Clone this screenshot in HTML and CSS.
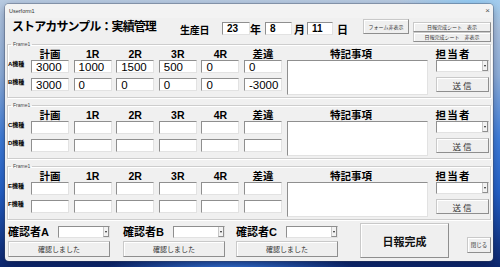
FILE: index.html
```html
<!DOCTYPE html>
<html lang="ja">
<head>
<meta charset="utf-8">
<title>UserForm1</title>
<link rel="stylesheet" href="styles.css">
</head>
<body>
<div class="window">
  <div class="titlebar">
    <span class="caption">Userform1</span>
    <span class="close">×</span>
  </div>

  <div class="topbar">
    <h1 class="title">ストアカサンプル：実績管理</h1>
    <span class="date-label">生産日</span>
    <div class="tb date d-year">23</div>
    <span class="unit u-year">年</span>
    <div class="tb date d-month">8</div>
    <span class="unit u-month">月</span>
    <div class="tb date d-day">11</div>
    <span class="unit u-day">日</span>
    <button class="btn btn-form">フォーム非表示</button>
    <div class="btn-stack">
      <button class="btn btn-sheet">日報完成シート　表示</button>
      <button class="btn btn-sheet">日報完成シート　非表示</button>
    </div>
  </div>

  <fieldset class="frame">
    <legend>Frame1</legend>
    <div class="grid">
      <span class="r0"></span>
      <span class="hd r0">計画</span>
      <span class="hd r0">1R</span>
      <span class="hd r0">2R</span>
      <span class="hd r0">3R</span>
      <span class="hd r0">4R</span>
      <span class="hd r0">差違</span>
      <span class="hd hd-note r0">特記事項</span>
      <span class="hd hd-tanto r0">担当者</span>

      <span class="rowlabel r1">A機種</span>
      <div class="tb r1">3000</div>
      <div class="tb r1">1000</div>
      <div class="tb r1">1500</div>
      <div class="tb r1">500</div>
      <div class="tb r1">0</div>
      <div class="tb r1">0</div>
      <div class="memo"></div>
      <div class="combo cell-combo"><span class="arrow"></span></div>

      <span class="rowlabel r2">B機種</span>
      <div class="tb r2">3000</div>
      <div class="tb r2">0</div>
      <div class="tb r2">0</div>
      <div class="tb r2">0</div>
      <div class="tb r2">0</div>
      <div class="tb r2">-3000</div>
      <button class="btn send">送信</button>
    </div>
  </fieldset>

  <fieldset class="frame">
    <legend>Frame1</legend>
    <div class="grid">
      <span class="r0"></span>
      <span class="hd r0">計画</span>
      <span class="hd r0">1R</span>
      <span class="hd r0">2R</span>
      <span class="hd r0">3R</span>
      <span class="hd r0">4R</span>
      <span class="hd r0">差違</span>
      <span class="hd hd-note r0">特記事項</span>
      <span class="hd hd-tanto r0">担当者</span>

      <span class="rowlabel r1">C機種</span>
      <div class="tb r1"></div>
      <div class="tb r1"></div>
      <div class="tb r1"></div>
      <div class="tb r1"></div>
      <div class="tb r1"></div>
      <div class="tb r1"></div>
      <div class="memo"></div>
      <div class="combo cell-combo"><span class="arrow"></span></div>

      <span class="rowlabel r2">D機種</span>
      <div class="tb r2"></div>
      <div class="tb r2"></div>
      <div class="tb r2"></div>
      <div class="tb r2"></div>
      <div class="tb r2"></div>
      <div class="tb r2"></div>
      <button class="btn send">送信</button>
    </div>
  </fieldset>

  <fieldset class="frame">
    <legend>Frame1</legend>
    <div class="grid">
      <span class="r0"></span>
      <span class="hd r0">計画</span>
      <span class="hd r0">1R</span>
      <span class="hd r0">2R</span>
      <span class="hd r0">3R</span>
      <span class="hd r0">4R</span>
      <span class="hd r0">差違</span>
      <span class="hd hd-note r0">特記事項</span>
      <span class="hd hd-tanto r0">担当者</span>

      <span class="rowlabel r1">E機種</span>
      <div class="tb r1"></div>
      <div class="tb r1"></div>
      <div class="tb r1"></div>
      <div class="tb r1"></div>
      <div class="tb r1"></div>
      <div class="tb r1"></div>
      <div class="memo"></div>
      <div class="combo cell-combo"><span class="arrow"></span></div>

      <span class="rowlabel r2">F機種</span>
      <div class="tb r2"></div>
      <div class="tb r2"></div>
      <div class="tb r2"></div>
      <div class="tb r2"></div>
      <div class="tb r2"></div>
      <div class="tb r2"></div>
      <button class="btn send">送信</button>
    </div>
  </fieldset>

  <div class="bottombar">
    <div class="confirm">
      <div class="confirm-top">
        <span class="confirm-label">確認者A</span>
        <div class="combo"><span class="arrow"></span></div>
      </div>
      <button class="btn confirm-btn">確認しました</button>
    </div>
    <div class="confirm confirm-b">
      <div class="confirm-top">
        <span class="confirm-label">確認者B</span>
        <div class="combo"><span class="arrow"></span></div>
      </div>
      <button class="btn confirm-btn">確認しました</button>
    </div>
    <div class="confirm confirm-c">
      <div class="confirm-top">
        <span class="confirm-label">確認者C</span>
        <div class="combo"><span class="arrow"></span></div>
      </div>
      <button class="btn confirm-btn">確認しました</button>
    </div>
    <button class="btn btn-done">日報完成</button>
    <button class="btn btn-close">閉じる</button>
  </div>
</div>
</body>
</html>
```

FILE: styles.css
```css
* {
  box-sizing: border-box;
}

html,
body {
  margin: 0;
  padding: 0;
}

body {
  width: 500px;
  height: 267px;
  overflow: hidden;
  position: relative;
  font-family: "Liberation Sans", "Noto Sans CJK JP", sans-serif;
  color: #000;
  background:
    radial-gradient(ellipse 170px 30px at 230px 272px, rgba(60, 130, 235, 0.95) 0%, rgba(60, 130, 235, 0) 75%),
    radial-gradient(ellipse 90px 40px at 470px 0px, rgba(150, 205, 245, 1) 0%, rgba(150, 205, 245, 0) 80%),
    linear-gradient(180deg, #b9cbe2 0%, #8fb0dc 28%, #3f7edb 52%, #2461c8 72%, #0d276e 100%);
}

/* ---------- window ---------- */
.window {
  position: absolute;
  left: 5px;
  top: 4px;
  width: 488px;
  height: 257px;
  background: #f0f0f0;
  border-radius: 4px;
  box-shadow: 0 0 0 1px rgba(60, 70, 90, 0.35), 0 3px 10px rgba(0, 0, 30, 0.35);
  display: flex;
  flex-direction: column;
}

.titlebar {
  height: 14px;
  display: flex;
  align-items: center;
  justify-content: space-between;
  padding: 0 3px 0 4px;
  background: #f3f3f3;
  border-radius: 4px 4px 0 0;
}

.caption {
  font-size: 5.5px;
  color: #333;
}

.close {
  font-size: 8px;
  line-height: 8px;
  color: #555;
}

/* ---------- top bar ---------- */
.topbar {
  height: 23px;
  display: flex;
  align-items: flex-start;
  padding-left: 7px;
}

.title {
  margin: 2px 0 0;
  width: 168px;
  font-size: 12px;
  line-height: 14px;
  font-weight: 700;
  letter-spacing: -0.9px;
  white-space: nowrap;
}

.date-label {
  margin-top: 7px;
  width: 30px;
  font-size: 10px;
  line-height: 12px;
  font-weight: 700;
  letter-spacing: -0.3px;
}

.unit {
  margin-top: 6px;
  width: 11px;
  font-size: 11px;
  line-height: 12px;
  font-weight: 700;
}

.tb {
  height: 13px;
  background: #fff;
  border: 1px solid;
  border-color: #8f8f8f #e2e2e2 #e2e2e2 #8f8f8f;
  font-size: 11.5px;
  line-height: 12px;
  padding: 0 0 0 4px;
  white-space: nowrap;
}

.date {
  margin-top: 4px;
  font-size: 10px;
  font-weight: 700;
  line-height: 12px;
  padding: 0 0 0 4px;
}

.d-year {
  margin-left: 12px;
  width: 28px;
}

.d-month {
  margin-left: 4px;
  width: 27px;
}

.u-month {
  margin-left: 2px;
}

.d-day {
  margin-left: 2px;
  width: 26px;
}

.u-day {
  margin-left: 4px;
}

/* ---------- buttons ---------- */
.btn {
  font-family: inherit;
  margin: 0;
  padding: 0;
  background: #efefef;
  border: 1px solid;
  border-color: #c9c9c9 #8e8e8e #8e8e8e #c9c9c9;
  box-shadow: inset 1px 1px 0 #fff;
  color: #333;
  white-space: nowrap;
  cursor: default;
}

.btn-form {
  margin: 1px 0 0 15px;
  width: 46px;
  height: 15px;
  font-size: 5px;
}

.btn-stack {
  margin: 4px 0 0 4px;
  width: 78px;
  display: flex;
  flex-direction: column;
}

.btn-sheet {
  height: 10px;
  font-size: 5px;
  line-height: 8px;
}

/* ---------- frames ---------- */
.frame {
  margin: 0 2px;
  padding: 0 1px 6px 0;
  min-width: 0;
  border: 1px solid #cdcdcd;
  box-shadow: 1px 1px 0 #fff, inset 1px 1px 0 #fff;
}

.frame + .frame {
  margin-top: 4px;
}

.frame legend {
  margin-left: 3px;
  padding: 0 2px;
  font-size: 5px;
  line-height: 7px;
  color: #444;
}

.grid {
  display: grid;
  grid-template-columns: 23px repeat(6, 42.6px) 149px 53px;
  grid-template-rows: 12px 13px 5px 13px;
}

.r0 {
  grid-row: 1;
}

.r1 {
  grid-row: 2;
}

.r2 {
  grid-row: 4;
}

.hd {
  width: 38px;
  text-align: center;
  font-size: 10.5px;
  line-height: 12px;
  font-weight: 700;
  white-space: nowrap;
}

.hd-note {
  width: 141px;
  padding-right: 12px;
}

.hd-tanto {
  width: 53px;
  text-align: left;
  letter-spacing: 1.2px;
}

.rowlabel {
  font-size: 6px;
  line-height: 7px;
  font-weight: 700;
  padding-top: 1px;
  white-space: nowrap;
}

.grid .tb {
  width: 38px;
}

.memo {
  grid-column: 8;
  grid-row: 2 / 5;
  width: 141px;
  height: 35px;
  background: #fff;
  border: 1px solid;
  border-color: #8f8f8f #e2e2e2 #e2e2e2 #8f8f8f;
}

.combo {
  position: relative;
  width: 53px;
  height: 12px;
  background: #fff;
  border: 1px solid;
  border-color: #8f8f8f #e2e2e2 #e2e2e2 #8f8f8f;
  display: flex;
  justify-content: flex-end;
}

.cell-combo {
  grid-column: 9;
  grid-row: 2;
}

.arrow {
  width: 6px;
  height: 100%;
  background: #f2f2f2;
  border-left: 1px solid #c8c8c8;
  border-right: 1px solid #8e8e8e;
  border-bottom: 1px solid #8e8e8e;
  display: flex;
  align-items: center;
  justify-content: center;
}

.arrow::after {
  content: "";
  width: 0;
  height: 0;
  border-left: 1.5px solid transparent;
  border-right: 1.5px solid transparent;
  border-top: 2px solid #222;
}

.send {
  grid-column: 9;
  grid-row: 4;
  margin-top: -1px;
  width: 53px;
  height: 15px;
  font-size: 8.5px;
  letter-spacing: 2px;
  padding-left: 2px;
}

/* ---------- bottom bar ---------- */
.bottombar {
  display: flex;
  align-items: flex-start;
  padding-left: 3px;
}

.confirm {
  margin-top: 6px;
  width: 102px;
  display: flex;
  flex-direction: column;
}

.confirm-b {
  margin-left: 13px;
}

.confirm-c {
  margin-left: 11px;
}

.confirm-top {
  display: flex;
  justify-content: space-between;
  align-items: center;
  height: 12px;
}

.confirm-label {
  font-size: 11px;
  line-height: 12px;
  font-weight: 700;
  white-space: nowrap;
}

.confirm-top .combo {
  width: 52px;
}

.confirm-btn {
  margin-top: 3px;
  height: 16px;
  font-size: 7px;
}

.btn-done {
  margin: 3px 0 0 22px;
  width: 89px;
  height: 35px;
  font-size: 11px;
  font-weight: 700;
  color: #111;
}

.btn-close {
  margin: 17px 0 0 18px;
  width: 24px;
  height: 16px;
  font-size: 5.5px;
}
```
